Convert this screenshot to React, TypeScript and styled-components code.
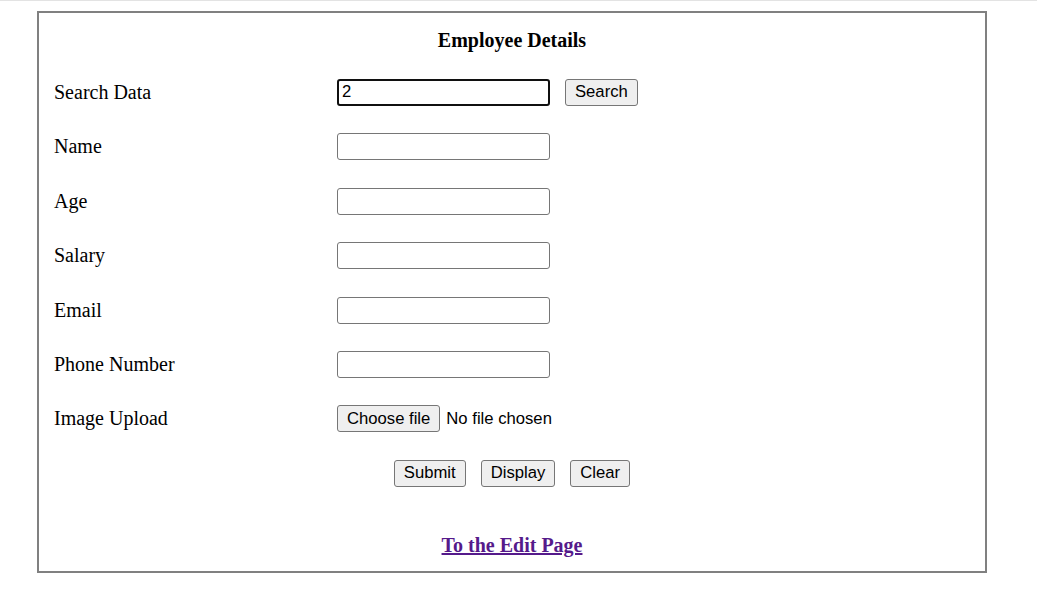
import React from "react";
import styled, { createGlobalStyle } from "styled-components";

const Global = createGlobalStyle`
  html, body { margin: 0; padding: 0; background: #fff; }
  body { font-family: "Liberation Serif", "Times New Roman", serif; color: #000; }
  * { box-sizing: border-box; }
`;

const TopRule = styled.div`
  height: 1px;
  background: #e3e3e3;
`;

const Frame = styled.form`
  margin: 10px 0 0 37px;
  width: 950px;
  height: 562px;
  border: 2px solid #808080;
  display: flex;
  flex-direction: column;
`;

const Title = styled.h1`
  margin: 0;
  height: 52.3px;
  display: flex;
  align-items: center;
  justify-content: center;
  font-size: 20px;
  font-weight: bold;
  padding-top: 3px;
`;

const Grid = styled.div`
  display: grid;
  grid-template-columns: 283px 1fr;
  grid-auto-rows: 54.4px;
  padding-left: 15px;
`;

const Label = styled.label`
  display: flex;
  align-items: center;
  font-size: 20px;
`;

const Cell = styled.div`
  display: flex;
  align-items: center;
  gap: 15px;
`;

const TextInput = styled.input<{ $focused?: boolean }>`
  width: 213px;
  height: 27px;
  border: ${(p) => (p.$focused ? "2px solid #101010" : "1px solid #767676")};
  border-radius: 3px;
  padding: 0 ${(p) => (p.$focused ? "3px" : "4px")};
  font-family: "Liberation Sans", Arial, sans-serif;
  font-size: 16.67px;
  color: #000;
  background: #fff;
  outline: none;
`;

const Button = styled.button`
  height: 27px;
  padding: 0 9px;
  border: 1px solid #767676;
  border-radius: 3px;
  background: #efefef;
  font-family: "Liberation Sans", Arial, sans-serif;
  font-size: 16.67px;
  color: #000;
  cursor: default;
`;

const FileCell = styled.div`
  display: flex;
  align-items: center;
  gap: 6px;
  font-family: "Liberation Sans", Arial, sans-serif;
  font-size: 16.67px;
`;

const ActionRow = styled.div`
  grid-column: 1 / -1;
  display: flex;
  align-items: center;
  justify-content: center;
  gap: 15px;
  margin-left: -15px;
`;

const LinkRow = styled.div`
  margin-top: 34px;
  display: flex;
  justify-content: center;
  font-size: 20px;
  font-weight: bold;
`;

const EditLink = styled.a`
  color: #551a8b;
  text-decoration: underline;
`;

const fields = ["Name", "Age", "Salary", "Email", "Phone Number"];

export default function App() {
  return (
    <>
      <Global />
      <TopRule />
      <Frame onSubmit={(e) => e.preventDefault()}>
        <Title>Employee Details</Title>
        <Grid>
          <Label>Search Data</Label>
          <Cell>
            <TextInput $focused defaultValue="2" />
            <Button type="button">Search</Button>
          </Cell>
          {fields.map((f) => (
            <React.Fragment key={f}>
              <Label>{f}</Label>
              <Cell>
                <TextInput />
              </Cell>
            </React.Fragment>
          ))}
          <Label>Image Upload</Label>
          <FileCell>
            <Button type="button">Choose file</Button>
            <span>No file chosen</span>
          </FileCell>
          <ActionRow>
            <Button type="submit">Submit</Button>
            <Button type="button">Display</Button>
            <Button type="button">Clear</Button>
          </ActionRow>
        </Grid>
        <LinkRow>
          <EditLink href="#edit">To the Edit Page</EditLink>
        </LinkRow>
      </Frame>
    </>
  );
}
